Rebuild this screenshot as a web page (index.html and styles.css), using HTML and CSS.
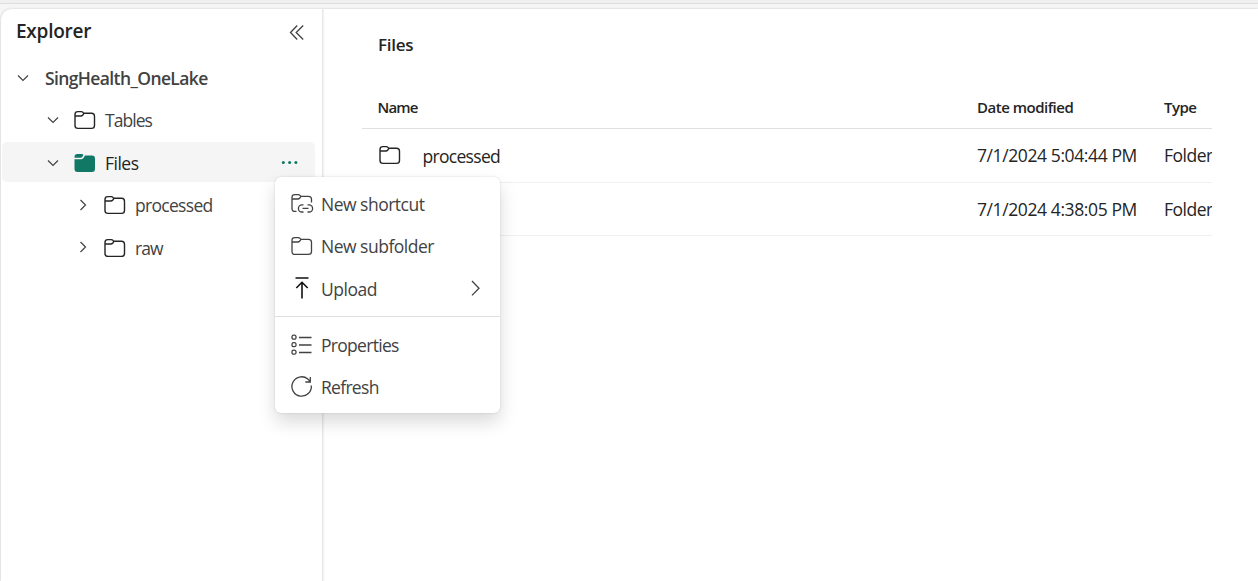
FILE: index.html
```html
<!DOCTYPE html>
<html lang="en">
<head>
<meta charset="utf-8">
<title>Explorer</title>
<link rel="stylesheet" href="styles.css">
</head>
<body>
<svg class="defs" width="0" height="0">
  <symbol id="folder" viewBox="0 0 22 20"><path d="M1 4.500Q1 1.600 3.800 1.600H7.200Q8.300 1.600 9 2.400L10 3.300H17.500Q20.500 3.300 20.500 6.300V15.500Q20.500 18.400 17.500 18.400H4Q1 18.400 1 15.500ZM1 6H6.800Q8 6 8.800 5L10 3.300"/></symbol>
  <symbol id="down" viewBox="0 0 12 8"><path d="M1 1.500 6 6.500 11 1.500"/></symbol>
  <symbol id="right" viewBox="0 0 8 12"><path d="M1.500 1 6.500 6 1.500 11"/></symbol>
</svg>
<div class="topbar"></div>
<div class="workspace">
  <aside class="sidebar">
    <header class="side-head">
      <h1 class="title">Explorer</h1>
      <svg class="collapse" viewBox="0 0 16 18"><path d="M8.200 1.500 1.500 8.500 8.200 15.500M14.200 1.500 7.200 8.500 14.200 15.500"/></svg>
    </header>
    <nav class="tree">
      <div class="node root"><svg class="chev-d"><use href="#down"/></svg><span class="label strong">SingHealth_OneLake</span></div>
      <div class="node lvl1"><svg class="chev-d"><use href="#down"/></svg><svg class="folder"><use href="#folder"/></svg><span class="label t-tables">Tables</span></div>
      <div class="node lvl1 selected"><svg class="chev-d"><use href="#down"/></svg><svg class="folder-fill" viewBox="0 0 22 20"><path d="M.5 4.700V4Q.5 1 3.500 1H7.500Q8.800 1 9.500 1.800L8.300 4Q7.700 4.700 6.800 4.700ZM.5 6.300H7Q8.500 6.300 9.400 5L11 2.600H18Q21 2.600 21 5.600V15.900Q21 18.900 18 18.900H3.500Q.5 18.900 .5 15.900Z"/></svg><span class="label">Files</span><svg class="dots" viewBox="0 0 18 4"><circle cx="2.300" cy="1.500" r="1.500"/><circle cx="8.600" cy="1.500" r="1.500"/><circle cx="14.900" cy="1.500" r="1.500"/></svg></div>
      <div class="node lvl2"><svg class="chev-r"><use href="#right"/></svg><svg class="folder"><use href="#folder"/></svg><span class="label t-proc">processed</span></div>
      <div class="node lvl2"><svg class="chev-r"><use href="#right"/></svg><svg class="folder"><use href="#folder"/></svg><span class="label t-raw">raw</span></div>
    </nav>
  </aside>
  <main class="main">
    <h2 class="heading">Files</h2>
    <div class="table">
      <div class="row head"><span class="name">Name</span><span class="h-date">Date modified</span><span class="h-type">Type</span></div>
      <div class="row"><span class="name"><svg class="folder"><use href="#folder"/></svg><span class="file">processed</span></span><span class="date">7/1/2024 5:04:44 PM</span><span class="type">Folder</span></div>
      <div class="row"><span class="name"></span><span class="date">7/1/2024 4:38:05 PM</span><span class="type">Folder</span></div>
    </div>
  </main>
</div>
<div class="menu">
  <div class="item"><svg class="mi low" viewBox="0 0 23 21"><path d="M5.500 18.400H4Q1 18.400 1 15.500V4.500Q1 1.600 3.800 1.600H7.200Q8.300 1.600 9 2.400L10 3.300H17.500Q20.500 3.300 20.500 6.300V9.500M1 6H6.800Q8 6 8.800 5L10 3.300M12.500 11.800H11A3.600 3.600 0 0 0 11 19H12.500M16.500 11.800H18A3.600 3.600 0 0 1 18 19H16.500M11.500 15.400H17.500"/></svg><span>New shortcut</span></div>
  <div class="item"><svg class="mi low" viewBox="0 0 23 21"><use href="#folder" width="22" height="20"/></svg><span>New subfolder</span></div>
  <div class="item"><svg class="mi upload" viewBox="0 0 23 21"><path d="M4.500 0H17.500M11 20.500V4.500M5.300 10 11 4.300 16.700 10"/></svg><span class="t-upload">Upload</span><svg class="more" viewBox="0 0 10 16"><path d="M1 1 8 8.200 1 15.400"/></svg></div>
  <div class="divider"></div>
  <div class="item"><svg class="mi" viewBox="0 0 23 21"><path d="M8 3.500H20.500M8 11H20.500M8 18.500H20.500"/><rect x="1" y="1.200" width="4" height="4" rx="1.500"/><rect x="1" y="8.700" width="4" height="4" rx="1.500"/><rect x="1" y="16.200" width="4" height="4" rx="1.500"/></svg><span class="tight">Properties</span></div>
  <div class="item"><svg class="mi" viewBox="0 0 23 21"><path d="M20.300 9.500A9.700 9.700 0 1 1 16.800 3L19.300 5.600M19.300 1V6H14.300"/></svg><span class="tight">Refresh</span></div>
</div>
</body>
</html>
```
FILE: styles.css
```css
* { box-sizing: border-box; }
body { margin: 0; width: 1258px; height: 581px; overflow: hidden; background: #f5f5f5; color: #424242; font: 17.5px/24px "Open Sans", "Noto Sans", sans-serif; letter-spacing: -.5px; display: flex; flex-direction: column; }
svg { fill: none; stroke: #424242; stroke-width: 1.3; flex: none; overflow: visible; }
.defs { position: absolute; }
span { white-space: nowrap; }
.topbar { height: 4px; flex: none; background: #f0f0f0; border-bottom: 1px solid #dedede; }
.workspace { flex: 1; margin-top: 5px; margin-left: 1px; display: flex; background: #fff; border-radius: 10px 0 0 0; box-shadow: 0 0 2px #bbb; }
.sidebar { width: 322px; border-right: 1px solid #e8e8e8; box-shadow: 1px 0 1px #f2f2f2; padding-left: 1px; }
.side-head { height: 48px; display: flex; justify-content: space-between; padding: 10px 17px 0 14px; }
.title { margin: 0; font-size: 19px; font-weight: 600; line-height: 24px; letter-spacing: -.25px; color: #242424; }
.collapse { width: 16px; height: 18px; margin-top: 5px; }
.tree { display: flex; flex-direction: column; gap: 2.500px; width: 313px; }
.node { height: 40px; display: flex; align-items: center; border-radius: 5px; }
.root { padding-left: 15px; }
.lvl1 { padding-left: 45px; }
.lvl2 { padding-left: 77px; }
.chev-d { width: 12px; height: 8px; stroke-width: 1.200; margin-top: 1px; }
.chev-r { width: 8px; height: 12px; margin-right: 1px; stroke-width: 1.200; }
.folder, .folder-fill { width: 22px; height: 20px; }
.node .folder, .folder-fill { margin: 1px 9px 0 15px; }
.lvl2 .folder { margin-left: 16px; }
.folder { stroke: #242424; stroke-width: 1.400; }
.folder-fill { fill: #117865; stroke: none; }
.strong { font-weight: 600; margin-left: 16px; letter-spacing: -.62px; }
.selected { background: #f5f5f5; color: #242424; }
.dots { width: 18px; height: 4px; margin-left: auto; margin-right: 16px; margin-top: 1px; fill: #117865; stroke: none; }
.label { padding-top: 2px; }
.t-tables { letter-spacing: -.95px; padding-top: 0; }
.t-proc { letter-spacing: -.7px; padding-top: 1px; }
.t-raw { letter-spacing: -.9px; }
.main { flex: 1; padding: 24px 46px 0 39px; color: #242424; }
.heading { margin: 0 0 0 16px; font-size: 17px; line-height: 24px; font-weight: 600; letter-spacing: -.3px; }
.table { margin-top: 30px; width: 850px; }
.row { display: grid; grid-template-columns: 615px 187px 48px; align-items: center; height: 53.500px; border-bottom: 1px solid #f0f0f0; }
.head { height: 42px; border-color: #e0e0e0; font-size: 15px; font-weight: 600; padding-bottom: 2px; }
.head .name { letter-spacing: -.8px; padding-left: 15.500px; }
.name { display: flex; align-items: center; padding-left: 16px; }
.name .folder { margin: 0 0 0 1px; }
.file { margin-left: 21.500px; padding-top: 2px; letter-spacing: -.7px; }
.date { letter-spacing: -.4px; }
.type { overflow: hidden; }
.menu { position: absolute; left: 275px; top: 177px; width: 225px; height: 236px; padding: 5px 0; background: #fff; border-radius: 6px; box-shadow: 0 0 2px rgba(0,0,0,.16), 0 9px 18px rgba(0,0,0,.15); }
.item { height: 42.400px; display: flex; align-items: center; padding: 0 19px 0 16px; }
.item span { padding-top: 1px; margin-left: 7px; }
.item .t-upload { padding-top: 3px; }
.item .tight { letter-spacing: -.7px; }
.mi { width: 23px; height: 21px; }
.low { margin-top: 1px; }
.upload { stroke: #111; stroke-width: 1.600; margin-top: 1px; }
.more { width: 10px; height: 16px; margin-left: auto; margin-top: 1px; }
.divider { height: 1px; background: #e0e0e0; margin: 7px 0 6px; }
```
